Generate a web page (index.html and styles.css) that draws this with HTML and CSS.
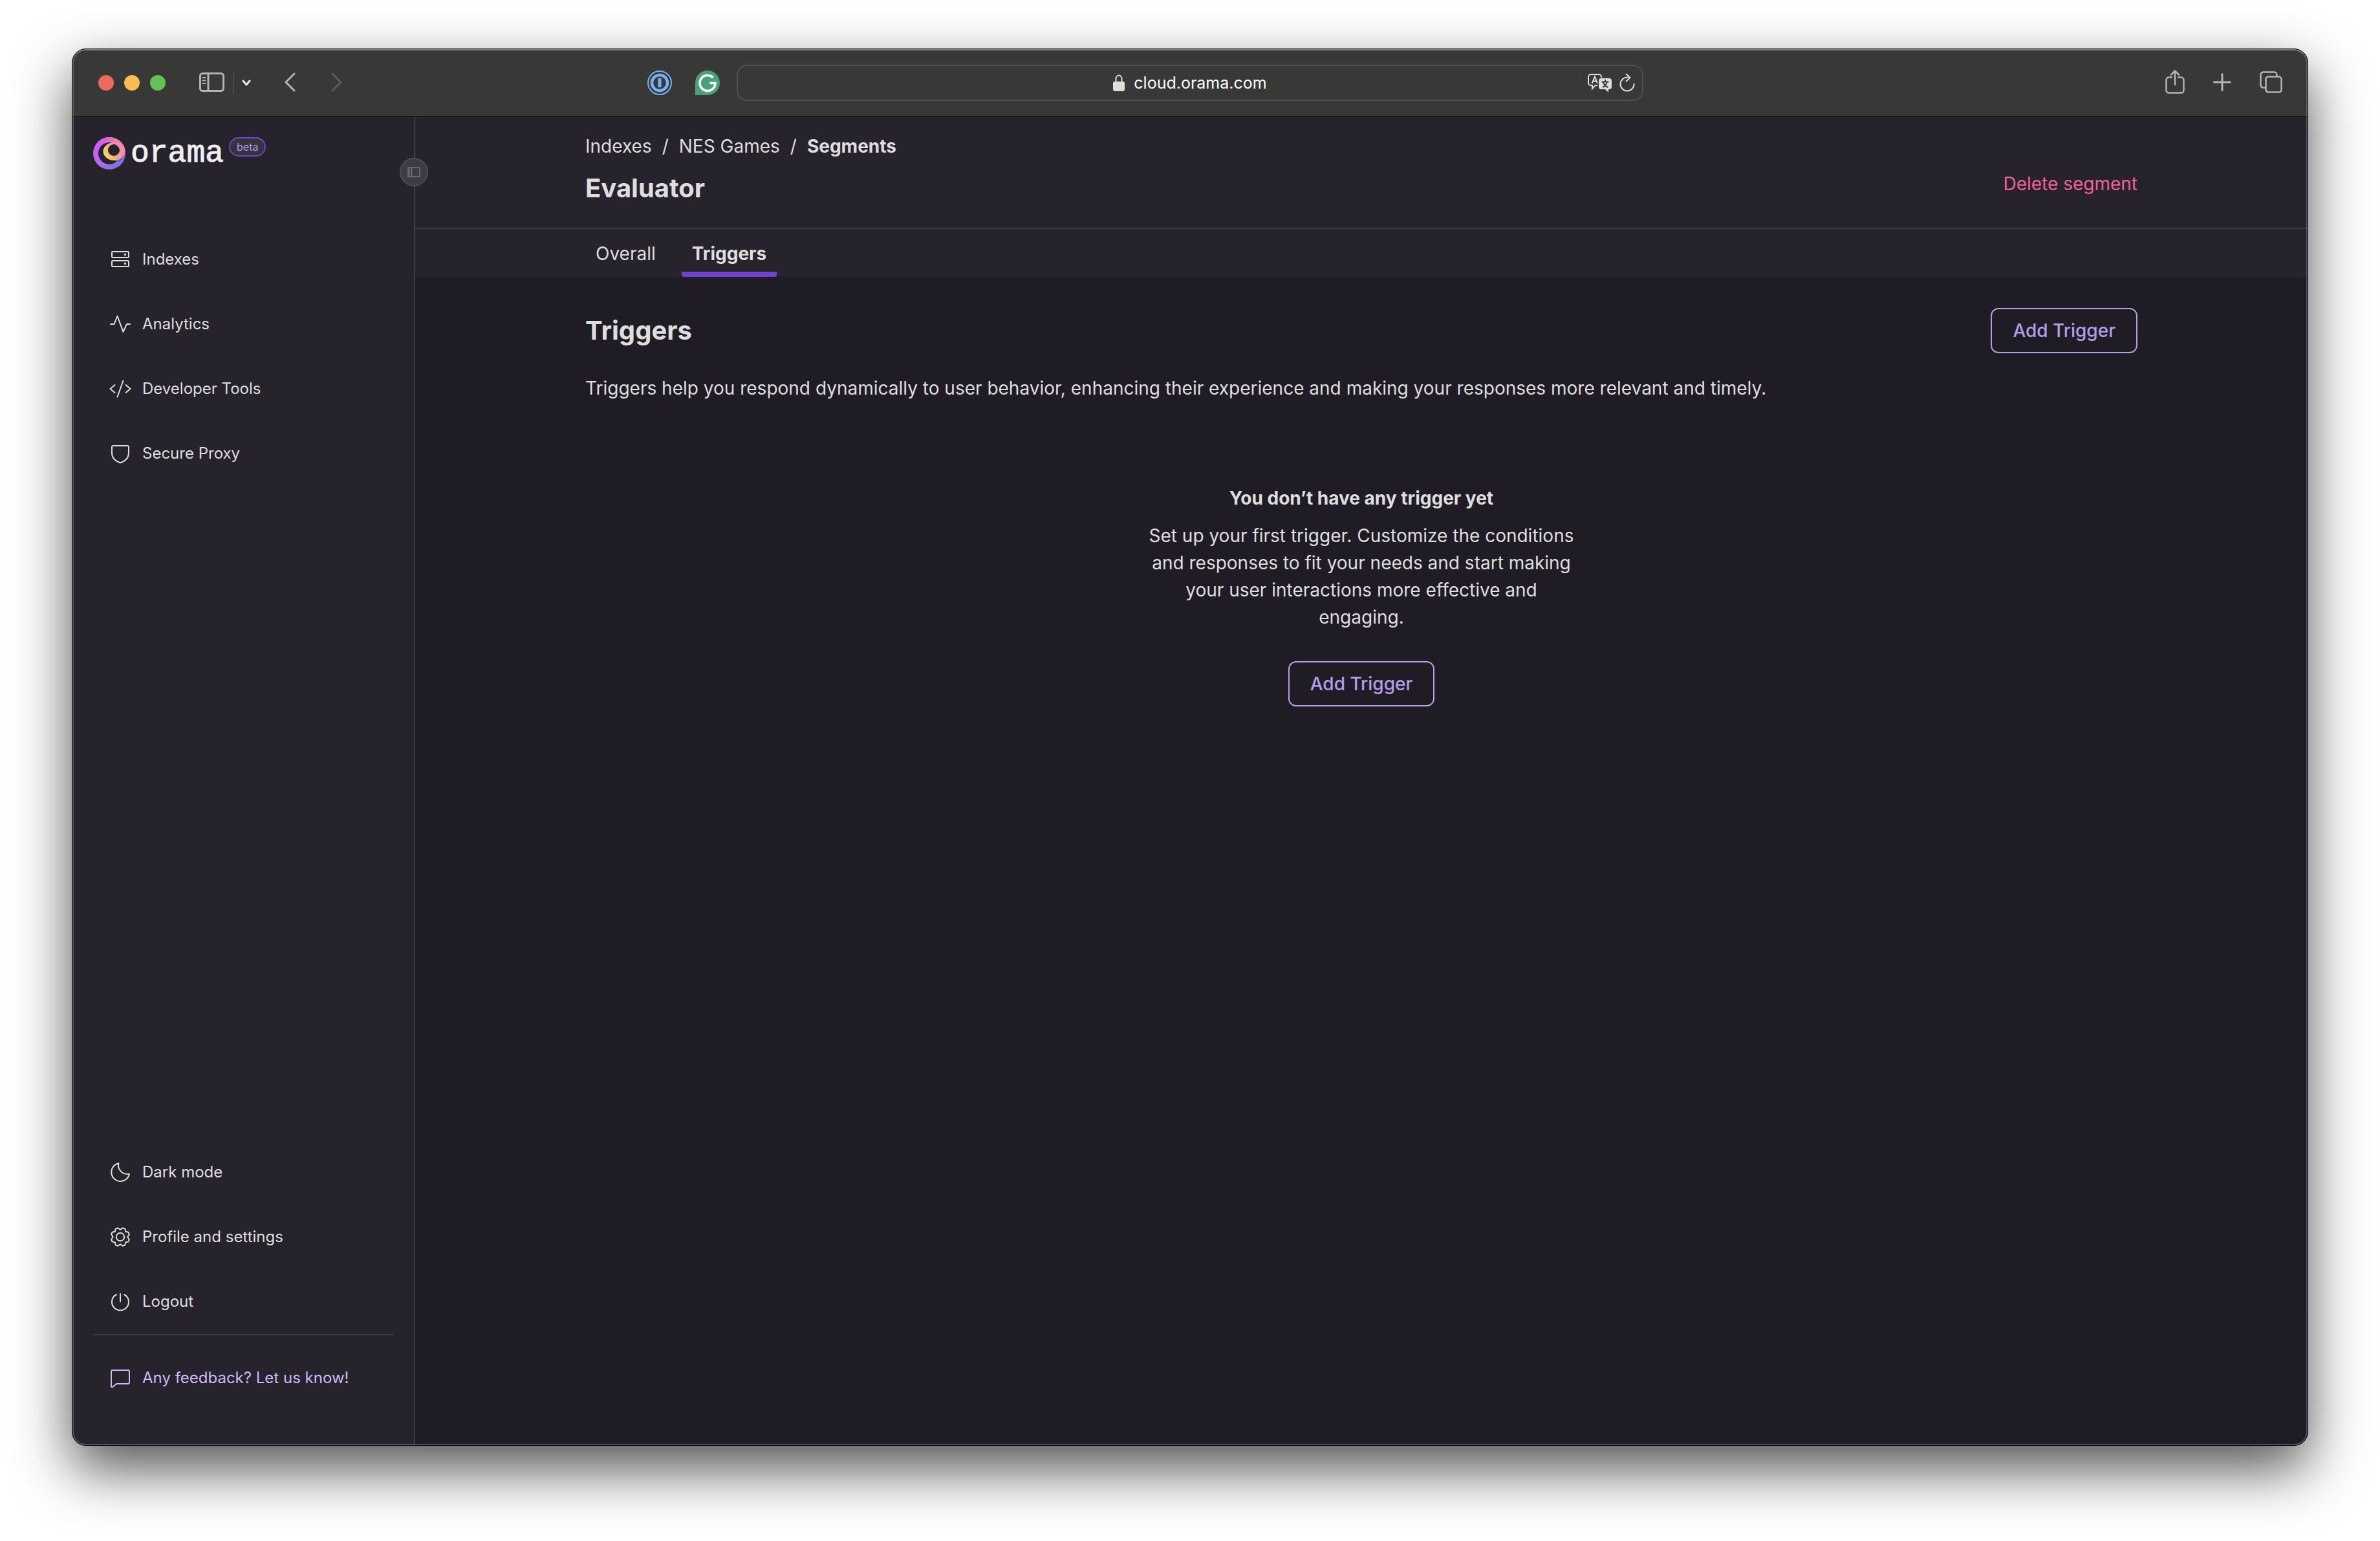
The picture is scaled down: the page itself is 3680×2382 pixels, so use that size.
FILE: index.html
```html
<!DOCTYPE html>
<html lang="en">
<head>
<meta charset="utf-8">
<meta name="viewport" content="width=device-width, initial-scale=1">
<title>Orama Cloud – Triggers</title>
<link rel="stylesheet" href="styles.css">
</head>
<body>
<div class="window">
  <header class="titlebar">
    <div class="titlebar-start">
      <div class="lights">
        <span class="light light-close"></span>
        <span class="light light-minimize"></span>
        <span class="light light-zoom"></span>
      </div>
      <div class="sidebar-tools">
        <button class="tool" type="button" aria-label="Show sidebar">
          <svg width="40" height="32" viewBox="0 0 40 32" fill="none" stroke="#b4b4b1" stroke-width="3"><rect x="1.500" y="1.500" width="36" height="27" rx="4"/><path d="M14 2v26"/><path d="M5.500 8h4M5.500 12.500h4M5.500 17h4" stroke-width="2" stroke-linecap="round"/></svg>
        </button>
        <span class="tool-divider"></span>
        <button class="tool" type="button" aria-label="Tab groups">
          <svg width="14" height="12" viewBox="0 0 14 12" fill="none" stroke="#e4e4e2" stroke-width="3" stroke-linecap="round" stroke-linejoin="round"><path d="M2 3l5 6 5-6"/></svg>
        </button>
      </div>
      <div class="history">
        <button class="tool" type="button" aria-label="Back">
          <svg width="17" height="32" viewBox="0 0 17 32" fill="none" stroke="#b4b4b1" stroke-width="3" stroke-linecap="round" stroke-linejoin="round"><path d="M15 2L2 15l13 13"/></svg>
        </button>
        <button class="tool" type="button" aria-label="Forward">
          <svg width="17" height="32" viewBox="0 0 17 32" fill="none" stroke="#5c5c5a" stroke-width="3" stroke-linecap="round" stroke-linejoin="round"><path d="M2 2l13 13L2 28"/></svg>
        </button>
      </div>
      <div class="extensions">
        <button class="tool" type="button" aria-label="1Password">
          <svg width="38" height="38" viewBox="0 0 38 38" fill="none" stroke="#78b0f8"><circle cx="19" cy="19" r="18" stroke-width="2"/><circle cx="19" cy="19" r="12" stroke-width="4.500"/><path d="M19 12v14" stroke-width="5"/></svg>
        </button>
        <button class="tool" type="button" aria-label="Grammarly">
          <svg width="38" height="38" viewBox="0 0 38 38" fill="none"><path d="M0 38V19A19 19 0 1 1 19 38z" fill="#4aa179"/><path d="M27.500 11a12 12 0 1 0 3.500 8.500h-8.500" stroke="#fff" stroke-width="3.500"/></svg>
        </button>
      </div>
    </div>
    <div class="address">
      <div class="address-main">
        <svg width="18" height="26" viewBox="0 0 18 26" fill="none"><path d="M4.500 12V7a4.500 5.500 0 0 1 9 0v5" stroke="#dededc" stroke-width="2"/><rect x="0" y="11" width="18" height="15" rx="3" fill="#dededc"/></svg>
        <input class="address-input" type="text" aria-label="Address" value="cloud.orama.com">
      </div>
      <div class="address-actions">
        <button class="tool" type="button" aria-label="Translate page">
          <svg width="40" height="30" viewBox="0 0 40 30" fill="none"><path d="M16 19h-3l-5 5v-5H6a4 4 0 0 1-4-4V6a4 4 0 0 1 4-4h12a4 4 0 0 1 4 4v1" stroke="#dededc" stroke-width="2"/><path d="M7.500 16L12 5.500 16 16M9 12.500h6" stroke="#dededc" stroke-width="2"/><path d="M22 8h12a4 4 0 0 1 4 4v9a4 4 0 0 1-4 4h-1v5l-5-5h-6a4 4 0 0 1-4-4v-9a4 4 0 0 1 4-4z" fill="#dededc"/><path d="M28 10v3M22.500 13.500h11M24 22c4-2 6-5 7-8.500M25 14c1 4 4 7 7.500 8" stroke="#383836" stroke-width="2"/></svg>
        </button>
        <button class="tool" type="button" aria-label="Reload">
          <svg width="24" height="30" viewBox="0 0 24 30" fill="none" stroke="#dededc" stroke-width="2" stroke-linecap="round" stroke-linejoin="round"><path d="M13 6.500A10.500 10.500 0 1 0 22.500 17M10.500 1.500l6 5.500-6 5.500"/></svg>
        </button>
      </div>
    </div>
    <div class="titlebar-end">
      <button class="tool" type="button" aria-label="Share">
        <svg width="30" height="40" viewBox="0 0 30 40" fill="none" stroke="#b4b4b1" stroke-width="2.500" stroke-linecap="round" stroke-linejoin="round"><path d="M10 11.500H5.500A4 4 0 0 0 1.500 15.500v16a4 4 0 0 0 4 4h19a4 4 0 0 0 4-4v-16a4 4 0 0 0-4-4H20M15 23V2M9 7.500L15 1.500l6 6"/></svg>
      </button>
      <button class="tool" type="button" aria-label="New tab">
        <svg width="28" height="30" viewBox="0 0 28 30" fill="none" stroke="#b4b4b1" stroke-width="3" stroke-linecap="round"><path d="M14 1.500v25M1.500 14h25"/></svg>
      </button>
      <button class="tool" type="button" aria-label="Show tab overview">
        <svg width="36" height="36" viewBox="0 0 36 36" fill="none" stroke="#b4b4b1" stroke-width="2.500"><rect x="9.500" y="8.500" width="24" height="24" rx="4"/><path d="M9 25.500H5.500a4 4 0 0 1-4-4v-16a4 4 0 0 1 4-4h17a4 4 0 0 1 4 4V8"/></svg>
      </button>
    </div>
  </header>

  <div class="app">
    <aside class="sidebar">
      <a class="brand" href="#">
        <svg class="brand-mark" width="50" height="50" viewBox="0 0 50 50" fill="none">
          <defs>
            <linearGradient id="outer" x1="6" y1="4" x2="38" y2="46" gradientUnits="userSpaceOnUse"><stop offset="0" stop-color="#d955f5"/><stop offset=".55" stop-color="#b06cf0"/><stop offset="1" stop-color="#7f74d8"/></linearGradient>
            <linearGradient id="top" x1="8" y1="10" x2="46" y2="28" gradientUnits="userSpaceOnUse"><stop offset="0" stop-color="#d65af2"/><stop offset=".6" stop-color="#e87fae"/><stop offset="1" stop-color="#f09a94"/></linearGradient>
            <linearGradient id="inner" x1="18" y1="30" x2="46" y2="16" gradientUnits="userSpaceOnUse"><stop offset="0" stop-color="#f3db68"/><stop offset=".5" stop-color="#f0a58a"/><stop offset="1" stop-color="#ec8ba6"/></linearGradient>
          </defs>
          <path d="M25 0a25 25 0 1 0 0 50 25 25 0 0 0 0-50zm0 8a17 17 0 1 1 0 34 17 17 0 0 1 0-34z" fill="url(#outer)"/>
          <path d="M47 12c5 10 3 20-7 26l-10-3c10-1 17-8 17-23z" fill="#6a55c8"/>
          <path d="M4 12C9 4 16 0 25 0c12 0 22 8 24 18l-12-5C31 6 20 7 14 12z" fill="url(#top)"/>
          <path d="M32 8a17 14 0 1 0 1 0zM32 11a9 9 0 1 1 0 18 9 9 0 0 1 0-18z" fill="url(#inner)" fill-rule="evenodd"/>
        </svg>
        <span class="brand-name">orama</span>
        <span class="badge">beta</span>
      </a>
      <button class="collapse" type="button" aria-label="Collapse sidebar">
        <svg width="20" height="16" viewBox="0 0 20 16" fill="none" stroke="#77747e" stroke-width="1.500"><path d="M1 1h18v14H1zM6.500 1v14M1 4.500h3M1 8h3M1 11.500h3"/></svg>
      </button>
      <nav class="nav" aria-label="Main">
        <a class="nav-link" href="#"><svg class="icon" viewBox="0 0 36 36"><rect x="5" y="6" width="26" height="9" rx="1.500"/><rect x="5" y="20" width="26" height="9" rx="1.500"/><circle cx="25.500" cy="10.500" r=".7"/><circle cx="25.500" cy="24.500" r=".7"/></svg>Indexes</a>
        <a class="nav-link" href="#"><svg class="icon" viewBox="0 0 36 36"><path d="M3 18h5.500l5-12.500 9 24.500L28 18h5"/></svg>Analytics</a>
        <a class="nav-link" href="#"><svg class="icon" viewBox="0 0 36 36"><path d="M9.500 12L2.500 18l7 6M26.500 12l7 6-7 6M22.500 5.500l-9 25"/></svg>Developer Tools</a>
        <a class="nav-link" href="#"><svg class="icon" viewBox="0 0 36 36"><path d="M7 6h22a2 2 0 0 1 2 2v9c0 9-6 13-13 15.500C11 30 5 26 5 17V8a2 2 0 0 1 2-2z"/></svg>Secure Proxy</a>
      </nav>
      <div class="nav nav-account">
        <button class="nav-link" type="button"><svg class="icon" viewBox="0 0 36 36"><path d="M15.500 4.200A14 14 0 1 0 32 20.500C21.500 22.500 13 13.500 15.500 4.200z"/></svg>Dark mode</button>
        <a class="nav-link" href="#"><svg class="icon" viewBox="-18 -18 36 36"><circle r="6.200"/><path d="M0-11.300L4-13.800 7.200-12.600 8.200-8.200 12.600-7.200 13.800-4 11.300 0 13.800 4 12.600 7.200 8.200 8.200 7.200 12.600 4 13.800 0 11.300-4 13.800-7.200 12.600-8.200 8.200-12.600 7.200-13.800 4-11.300 0-13.800-4-12.600-7.200-8.200-8.200-7.200-12.600-4-13.800z"/></svg>Profile and settings</a>
        <button class="nav-link" type="button"><svg class="icon" viewBox="0 0 36 36"><path d="M12 7a13 13 0 1 0 12 0M18 6v12"/></svg>Logout</button>
      </div>
      <div class="feedback">
        <a class="nav-link nav-link-accent" href="#"><svg class="icon" viewBox="0 0 36 36"><path d="M6 6h24a2 2 0 0 1 2 2v17a2 2 0 0 1-2 2H12l-6 5a1.200 1.200 0 0 1-2-1V8a2 2 0 0 1 2-2z"/></svg>Any feedback? Let us know!</a>
      </div>
    </aside>

    <div class="page">
      <header class="page-header">
        <div class="container header-row">
          <div class="header-titles">
            <nav class="breadcrumb" aria-label="Breadcrumb">
              <a href="#">Indexes</a><span>/</span><a href="#">NES Games</a><span>/</span><strong>Segments</strong>
            </nav>
            <h1 class="title">Evaluator</h1>
          </div>
          <button class="delete" type="button">Delete segment</button>
        </div>
      </header>
      <div class="tabs-bar">
        <nav class="container tabs" aria-label="Segment sections">
          <a class="tab" href="#">Overall</a>
          <a class="tab tab-active" href="#" aria-current="page">Triggers</a>
        </nav>
      </div>
      <main class="container content">
        <div class="section-head">
          <h2 class="title">Triggers</h2>
          <button class="button" type="button">Add Trigger</button>
        </div>
        <p class="lead">Triggers help you respond dynamically to user behavior, enhancing their experience and making your responses more relevant and timely.</p>
        <section class="empty">
          <h3 class="empty-title">You don’t have any trigger yet</h3>
          <p class="empty-text">Set up your first trigger. Customize the conditions and responses to fit your needs and start making your user interactions more effective and engaging.</p>
          <button class="button" type="button">Add Trigger</button>
        </section>
      </main>
    </div>
  </div>
</div>
</body>
</html>
```
FILE: styles.css
```css
:root {
  --bar: #383836;
  --surface: #26232c;
  --canvas: #201c26;
  --line: #3f3c47;
  --text: #dededf;
  --accent: #b49ee8;
  --accent-strong: #6e44d0;
}

* {
  box-sizing: border-box;
}

body {
  display: flex;
  flex-direction: column;
  min-height: 100vh;
  margin: 0;
  padding: 75px 111px 147px;
  background: #fff;
  color: var(--text);
  font-family: Inter, "Liberation Sans", sans-serif;
  font-size: 28px;
  line-height: 42px;
}

a {
  color: inherit;
  text-decoration: none;
}

button,
input {
  margin: 0;
  padding: 0;
  border: 0;
  background: none;
  color: inherit;
  font: inherit;
}

h1,
h2,
h3,
p {
  margin: 0;
}

svg {
  display: block;
  flex: none;
}

/* Browser window */

.window {
  position: relative;
  display: flex;
  flex: 1;
  flex-direction: column;
  overflow: hidden;
  border: 1px solid #000;
  border-radius: 22px;
  background: var(--canvas);
  box-shadow: 0 36px 88px rgba(0, 0, 0, 0.68);
}

.window::after {
  position: absolute;
  inset: 0;
  border: 2px solid rgba(255, 255, 255, 0.22);
  border-top-color: rgba(255, 255, 255, 0.36);
  border-radius: 21px;
  content: "";
  pointer-events: none;
}

.titlebar {
  display: grid;
  grid-template-columns: 1fr minmax(0, 1402px) 1fr;
  align-items: center;
  height: 105px;
  border-bottom: 1px solid #000;
  background: var(--bar);
}

.titlebar-start,
.titlebar-end,
.lights,
.sidebar-tools,
.history,
.extensions,
.address-main,
.address-actions {
  display: flex;
  align-items: center;
}

.titlebar-start {
  padding: 0 26px 0 40px;
}

.titlebar-end {
  justify-content: flex-end;
  gap: 44px;
  padding-right: 38px;
}

.lights {
  gap: 16px;
}

.light {
  width: 24px;
  height: 24px;
  border-radius: 50%;
}

.light-close {
  background: #ed6a5e;
}

.light-minimize {
  background: #f4be50;
}

.light-zoom {
  background: #61c455;
}

.sidebar-tools {
  gap: 12px;
  margin-left: 52px;
}

.tool-divider {
  width: 2px;
  height: 36px;
  background: #4b4b49;
}

.history {
  gap: 55px;
  margin-left: 52px;
}

.extensions {
  gap: 36px;
  margin-left: auto;
}

.address {
  display: grid;
  grid-template-columns: 1fr auto 1fr;
  align-items: center;
  height: 56px;
  padding: 0 11px;
  border: 2px solid #50504e;
  border-radius: 16px;
}

.address-main {
  grid-column: 2;
  gap: 14px;
}

.address-input {
  color: #fff;
  font-size: 25px;
  line-height: 32px;
  field-sizing: content;
}

.address-actions {
  justify-content: flex-end;
  gap: 10px;
}

/* Sidebar */

.app {
  display: flex;
  flex: 1;
}

.sidebar {
  position: relative;
  display: flex;
  flex: none;
  flex-direction: column;
  width: 530px;
  padding: 28px 32px 72px;
  border-right: 2px solid var(--line);
  background: var(--surface);
}

.brand {
  display: flex;
  align-items: center;
  height: 56px;
}

.brand-name {
  margin-left: 8px;
  color: #f0eef2;
  font-family: "Liberation Mono", monospace;
  font-size: 48px;
  line-height: 56px;
  -webkit-text-stroke: 1px currentColor;
}

.badge {
  align-self: flex-start;
  margin: 3px 0 0 8px;
  padding: 0 10px;
  border: 2px solid var(--accent-strong);
  border-radius: 15px;
  background: #36333d;
  color: var(--accent);
  font-size: 16px;
  line-height: 26px;
}

.collapse {
  position: absolute;
  top: 63px;
  right: -22px;
  display: flex;
  align-items: center;
  justify-content: center;
  width: 44px;
  height: 44px;
  border: 2px solid #504d56;
  border-radius: 50%;
  background: #3e3b46;
}

.nav {
  display: flex;
  flex-direction: column;
  gap: 36px;
  margin-top: 104px;
}

.nav-account {
  margin-top: auto;
}

.nav-link {
  display: flex;
  gap: 16px;
  align-items: center;
  height: 64px;
  padding: 0 24px;
  font-size: 24px;
  text-align: left;
}

.nav-link-accent {
  color: #cdb9f7;
}

.icon {
  width: 36px;
  height: 36px;
  fill: none;
  stroke: currentColor;
  stroke-width: 2;
  stroke-linecap: round;
  stroke-linejoin: round;
}

.feedback {
  margin-top: 18px;
  padding-top: 34px;
  border-top: 2px solid var(--line);
}

/* Page */

.page {
  flex: 1;
  min-width: 0;
}

.container {
  width: 100%;
  max-width: 2400px;
  margin: 0 auto;
}

.page-header {
  border-bottom: 2px solid var(--line);
  background: var(--surface);
}

.header-row {
  display: flex;
  align-items: center;
  justify-content: space-between;
  padding: 24px 0 31px;
}

.breadcrumb {
  display: flex;
  gap: 16px;
}

.breadcrumb strong,
.tab-active,
.empty-title {
  font-weight: 700;
}

.title {
  font-size: 40px;
  font-weight: 700;
  line-height: 60px;
}

.header-titles .title {
  margin-top: 14px;
}

.delete {
  padding-top: 42px;
  color: #f0609a;
}

.tabs-bar {
  background: var(--surface);
}

.tabs {
  display: flex;
  gap: 24px;
}

.tab {
  height: 74px;
  padding: 17px 16px 0;
}

.tab-active {
  background: linear-gradient(var(--accent-strong), var(--accent-strong)) bottom / 100% 8px no-repeat;
  border-radius: 4px;
}

.content {
  padding-top: 48px;
}

.section-head {
  display: flex;
  align-items: center;
  justify-content: space-between;
}

.button {
  height: 70px;
  padding: 0 32px;
  border: 2px solid var(--accent);
  border-radius: 12px;
  color: var(--accent);
  font-weight: 500;
}

.lead {
  margin-top: 33px;
}

.empty {
  display: flex;
  flex-direction: column;
  align-items: center;
  margin-top: 128px;
  text-align: center;
}

.empty-title {
  font-size: 28px;
}

.empty-text {
  max-width: 672px;
  margin: 16px 0 47px;
}
```
